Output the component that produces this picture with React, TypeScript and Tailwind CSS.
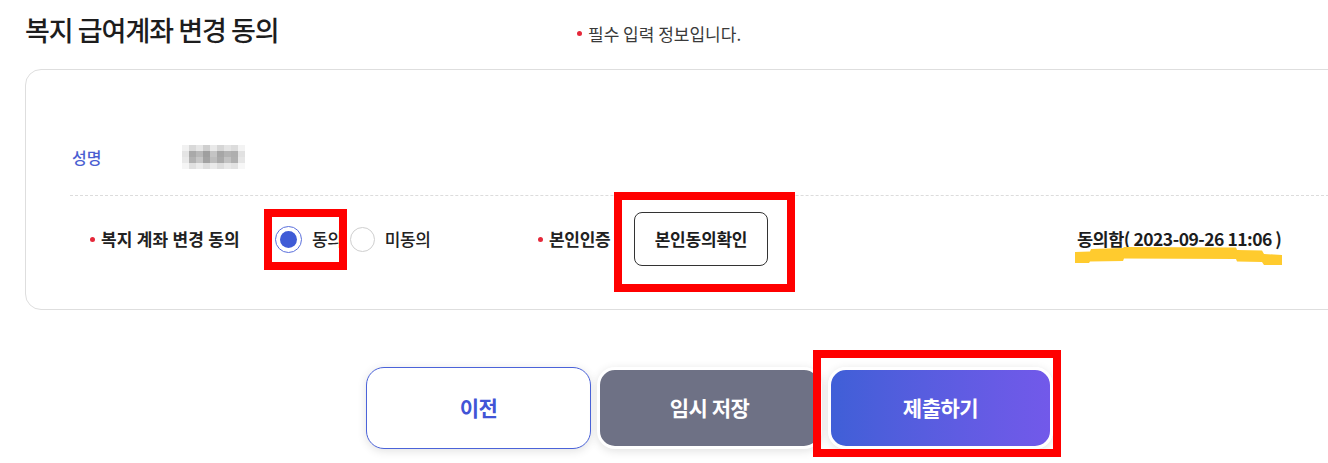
import React from 'react';

const font = "font-['Noto_Sans_CJK_KR','Noto_Sans',sans-serif]";

// pixelated stand-in for the masked name
const mosaic = [
  ['#f1f1f1', '#d9d9d9', '#e6e6e6', '#cfcfcf', '#e9e9e9', '#d6d6d6', '#e4e4e4', '#dcdcdc', '#f3f3f3'],
  ['#e4e4e4', '#a9a9a9', '#b8b8b8', '#9f9f9f', '#c4c4c4', '#a6a6a6', '#b3b3b3', '#aeaeae', '#e1e1e1'],
  ['#e9e9e9', '#b2b2b2', '#c6c6c6', '#a3a3a3', '#bdbdbd', '#aaaaaa', '#c2c2c2', '#b0b0b0', '#e6e6e6'],
  ['#f5f5f5', '#e0e0e0', '#ebebeb', '#dedede', '#eaeaea', '#dddddd', '#e8e8e8', '#e2e2e2', '#f7f7f7'],
];

function RedDot() {
  return <span className="inline-block w-[5px] h-[5px] rounded-full bg-[#e5283a] mr-[6px]" />;
}

function Radio({ checked, label }: { checked?: boolean; label: string }) {
  return (
    <label className="flex items-center">
      {checked ? (
        <span className="w-[27px] h-[27px] rounded-full border-[1.5px] border-[#5a6fdc] flex items-center justify-center">
          <span className="w-[17px] h-[17px] rounded-full bg-[#3f5bd6]" />
        </span>
      ) : (
        <span className="w-[25px] h-[25px] rounded-full border border-[#cfcfcf] bg-white" />
      )}
      <span className="ml-[10px] text-[17px] text-[#222] font-medium tracking-[-0.3px]">{label}</span>
    </label>
  );
}

export default function App() {
  return (
    <div className={`relative w-[1328px] h-[463px] overflow-hidden bg-white ${font}`}>
      {/* header */}
      <div className="h-[69px] pl-[25px] flex items-start pt-[10px]">
        <h1 className="w-[552px] text-[27px] font-medium tracking-[-1px] text-[#1d1d1d]">복지 급여계좌 변경 동의</h1>
        <p className="mt-[11px] flex items-center text-[17px] text-[#3a3a3a]">
          <RedDot />필수 입력 정보입니다.
        </p>
      </div>

      {/* form card */}
      <div className="ml-[25px] w-[1330px] h-[241px] border border-[#dedede] rounded-[16px] pt-[48px]">
        <div className="ml-[44px]">
          <div className="h-[78px] flex items-center border-b border-dashed border-[#dcdcdc]">
            <span className="w-[112px] pl-[2px] text-[16px] font-medium text-[#4a5ed1]">성명</span>
            <div className="flex flex-col">
              {mosaic.map((row, i) => (
                <div key={i} className="flex">
                  {row.map((c, j) => (
                    <span key={j} className="w-[7px] h-[6px]" style={{ backgroundColor: c }} />
                  ))}
                </div>
              ))}
            </div>
          </div>

          <div className="h-[86px] flex items-center pl-[20px]">
            <div className="w-[185px] flex items-center text-[17px] font-bold text-[#222] tracking-[0.2px]">
              <RedDot />복지 계좌 변경 동의
            </div>
            <div className="w-[263px] flex items-center gap-[7px]">
              <Radio checked label="동의" />
              <Radio label="미동의" />
            </div>
            <div className="w-[96px] flex items-center text-[17px] font-bold text-[#222] tracking-[-0.3px]">
              <RedDot />본인인증
            </div>
            <button className="w-[134px] h-[54px] border border-[#333] rounded-[8px] bg-white text-[17px] font-bold text-[#1d1d1d] tracking-[-0.2px]">
              본인동의확인
            </button>
            <span className="ml-[309px] text-[17.5px] font-bold text-[#1d1d1d] tracking-[-0.5px]">동의함( 2023-09-26 11:06 )</span>
          </div>
        </div>
      </div>

      {/* actions */}
      <div className="flex gap-[6px] pl-[366px] pt-[57px]">
        <button className="w-[225px] h-[82px] rounded-[18px] border border-[#4b63d9] bg-white text-[21px] font-bold text-[#4154d6] tracking-[-0.5px] shadow-[0_2px_10px_rgba(0,0,0,0.12)]">
          이전
        </button>
        <button className="w-[225px] h-[82px] rounded-[18px] border-[3px] border-white bg-[#6e7185] text-[21px] font-bold text-white tracking-[-0.5px] shadow-[0_2px_10px_rgba(0,0,0,0.12)]">
          임시 저장
        </button>
        <button className="w-[225px] h-[82px] rounded-[18px] border-[3px] border-white bg-gradient-to-r from-[#3f5fd7] to-[#7259ea] text-[21px] font-bold text-white tracking-[-0.5px] shadow-[0_2px_10px_rgba(0,0,0,0.12)]">
          제출하기
        </button>
      </div>

      {/* review annotations */}
      <svg className="absolute left-[1074px] top-[246px]" width="210" height="22" viewBox="0 0 210 22">
        <path
          d="M1 6 L16 5.5 L17 3 L49 2 L50 1 L162 1.5 L163 4 L188 4.5 L190 8 L208 9 L208 19 L190 19 L188 16 L163 15.5 L162 13 L50 12.5 L49 15 L16 15.5 L15 17 L1 17 Z"
          fill="#ffcb2e"
        />
      </svg>
      <div className="absolute left-[264px] top-[209px] w-[83px] h-[61px] border-[8px] border-[#ff0000]" />
      <div className="absolute left-[614px] top-[192px] w-[181px] h-[100px] border-[8px] border-[#ff0000]" />
      <div className="absolute left-[813px] top-[350px] w-[248px] h-[107px] border-[8px] border-[#ff0000]" />
    </div>
  );
}
